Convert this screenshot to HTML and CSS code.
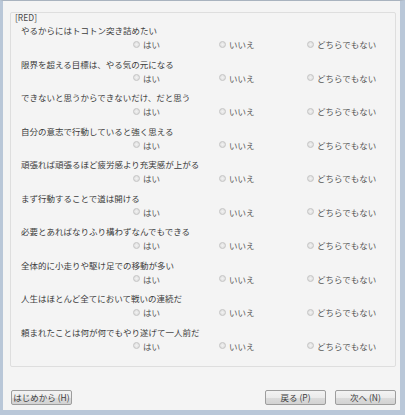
FILE: index.html
```html
<!DOCTYPE html>
<html lang="ja">
<head>
    <meta charset="utf-8">
    <title>RED</title>
    <link rel="stylesheet" href="styles.css">
</head>
<body>
    <div class="window">
        <div class="group">
            <div class="group-label">[RED]</div>
            <div class="item">
                <div class="question">やるからにはトコトン突き詰めたい</div>
                <div class="options">
                    <label class="opt"><span class="radio"></span>はい</label>
                    <label class="opt"><span class="radio"></span>いいえ</label>
                    <label class="opt"><span class="radio"></span>どちらでもない</label>
                </div>
            </div>
            <div class="item">
                <div class="question">限界を超える目標は、やる気の元になる</div>
                <div class="options">
                    <label class="opt"><span class="radio"></span>はい</label>
                    <label class="opt"><span class="radio"></span>いいえ</label>
                    <label class="opt"><span class="radio"></span>どちらでもない</label>
                </div>
            </div>
            <div class="item">
                <div class="question">できないと思うからできないだけ、だと思う</div>
                <div class="options">
                    <label class="opt"><span class="radio"></span>はい</label>
                    <label class="opt"><span class="radio"></span>いいえ</label>
                    <label class="opt"><span class="radio"></span>どちらでもない</label>
                </div>
            </div>
            <div class="item">
                <div class="question">自分の意志で行動していると強く思える</div>
                <div class="options">
                    <label class="opt"><span class="radio"></span>はい</label>
                    <label class="opt"><span class="radio"></span>いいえ</label>
                    <label class="opt"><span class="radio"></span>どちらでもない</label>
                </div>
            </div>
            <div class="item">
                <div class="question">頑張れば頑張るほど疲労感より充実感が上がる</div>
                <div class="options">
                    <label class="opt"><span class="radio"></span>はい</label>
                    <label class="opt"><span class="radio"></span>いいえ</label>
                    <label class="opt"><span class="radio"></span>どちらでもない</label>
                </div>
            </div>
            <div class="item">
                <div class="question">まず行動することで道は開ける</div>
                <div class="options">
                    <label class="opt"><span class="radio"></span>はい</label>
                    <label class="opt"><span class="radio"></span>いいえ</label>
                    <label class="opt"><span class="radio"></span>どちらでもない</label>
                </div>
            </div>
            <div class="item">
                <div class="question">必要とあればなりふり構わずなんでもできる</div>
                <div class="options">
                    <label class="opt"><span class="radio"></span>はい</label>
                    <label class="opt"><span class="radio"></span>いいえ</label>
                    <label class="opt"><span class="radio"></span>どちらでもない</label>
                </div>
            </div>
            <div class="item">
                <div class="question">全体的に小走りや駆け足での移動が多い</div>
                <div class="options">
                    <label class="opt"><span class="radio"></span>はい</label>
                    <label class="opt"><span class="radio"></span>いいえ</label>
                    <label class="opt"><span class="radio"></span>どちらでもない</label>
                </div>
            </div>
            <div class="item">
                <div class="question">人生はほとんど全てにおいて戦いの連続だ</div>
                <div class="options">
                    <label class="opt"><span class="radio"></span>はい</label>
                    <label class="opt"><span class="radio"></span>いいえ</label>
                    <label class="opt"><span class="radio"></span>どちらでもない</label>
                </div>
            </div>
            <div class="item">
                <div class="question">頼まれたことは何が何でもやり遂げて一人前だ</div>
                <div class="options">
                    <label class="opt"><span class="radio"></span>はい</label>
                    <label class="opt"><span class="radio"></span>いいえ</label>
                    <label class="opt"><span class="radio"></span>どちらでもない</label>
                </div>
            </div>
        </div>

        <div class="buttons">
            <button class="btn">はじめから (H)</button>
            <div class="nav">
                <button class="btn">戻る (P)</button>
                <button class="btn">次へ (N)</button>
            </div>
        </div>
    </div>
</body>
</html>
```

FILE: styles.css
```css
html, body {
    margin: 0;
    padding: 0;
}

body {
    font-family: "Noto Sans CJK JP", "Noto Sans", sans-serif;
    font-size: 8.5px;
    color: #3c3c3c;
    background: #b9c7d8;
}

.window {
    box-sizing: border-box;
    width: 405px;
    height: 415px;
    background: #f4f4f4;
    border-top: 1px solid #a9b3bf;
    border-left: 3px solid #b9c7d8;
    border-right: 5px solid #b9c7d8;
    border-bottom: 5px solid #b9c7d8;
    display: flex;
    flex-direction: column;
}

.group {
    margin: 11px 4px 0 7px;
    height: 355px;
    box-sizing: border-box;
    border: 1px solid #dedede;
    border-radius: 2px;
    padding: 0 0 0 10px;
}

.group-label {
    margin-left: -6px;
    margin-top: -1px;
    line-height: 11px;
    color: #4a4a4a;
}

.item {
    margin-bottom: 5.5px;
}

.question {
    line-height: 14px;
    height: 14px;
    white-space: nowrap;
}

.options {
    display: grid;
    grid-template-columns: 86px 88px auto;
    padding-left: 112px;
    line-height: 14px;
    height: 14px;
    color: #585858;
}

.opt {
    display: flex;
    align-items: center;
    white-space: nowrap;
}

.radio {
    display: inline-block;
    width: 5px;
    height: 5px;
    border: 1px solid #c4c4c4;
    border-radius: 50%;
    background: radial-gradient(circle, #f2f2f2 0%, #dadada 100%);
    margin-right: 3px;
}

.buttons {
    display: flex;
    justify-content: space-between;
    margin: 23px 4px 0 8px;
}

.nav {
    display: flex;
    gap: 9px;
}

.btn {
    width: 61px;
    height: 15px;
    padding: 0;
    font-family: "Noto Sans CJK JP", "Noto Sans", sans-serif;
    font-size: 8.5px;
    line-height: 13px;
    color: #3c3c3c;
    border: 1px solid #9d9d9d;
    border-radius: 2px;
    background: linear-gradient(#f3f3f3 0%, #ebebeb 50%, #dcdcdc 51%, #d2d2d2 100%);
}
```
